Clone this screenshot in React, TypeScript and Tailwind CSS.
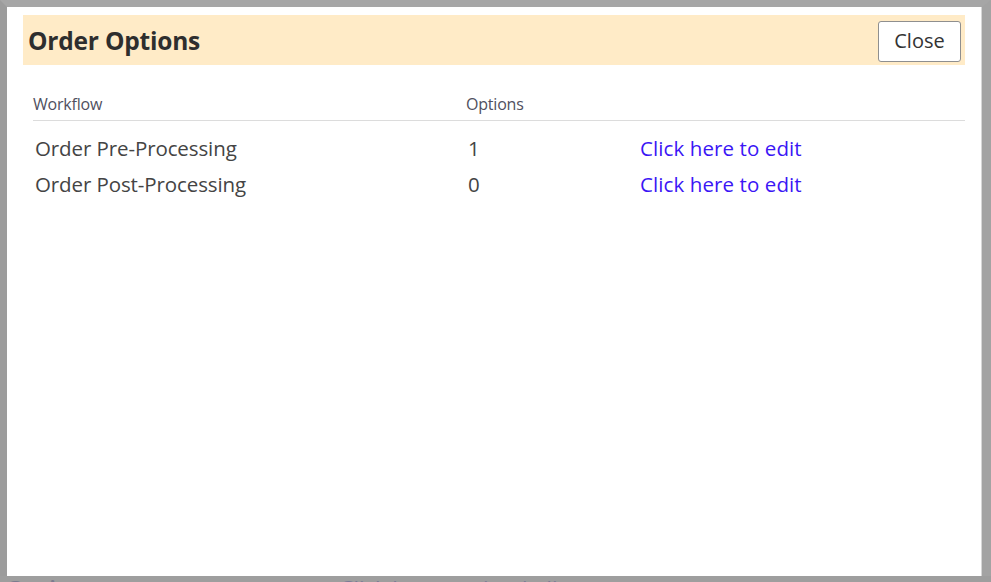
import React, { JSX } from 'react';

/**
 * OrderOptionsDialog
 * Modal listing the order workflows and how many options each one has.
 */
interface WorkflowRow {
  name: string;
  options: number;
}

const rows: WorkflowRow[] = [
  { name: 'Order Pre-Processing', options: 1 },
  { name: 'Order Post-Processing', options: 0 },
];

export default function App(): JSX.Element {
  return (
    <div
      className="w-[991px] h-[582px] flex flex-col bg-[#a3a3a3] overflow-hidden"
      style={{ fontFamily: '"Open Sans", "Noto Sans", sans-serif' }}
    >
      {/* Dialog frame */}
      <div className="flex-1 flex border-l-[7px] border-t-[7px] border-r-[9px] border-[#a3a3a3] border-l-[#9c9c9c] border-t-[#a6a6a6]">
        <div className="flex-1 flex flex-col bg-white border-r border-[#d6d6d6] pt-2 pl-4 pr-4">
          {/* Header */}
          <div className="h-[50px] bg-[#ffebc7] flex items-center justify-between pl-[5px] pr-1">
            <h2 className="text-[24.5px] font-bold text-[#2e2e2e] tracking-[-0.2px] mt-[2px]">Order Options</h2>
            <button
              type="button"
              className="h-[41px] w-[83px] bg-white border border-[#8f8f8f] rounded-[3px] text-[20px] text-[#333] mt-[2px]"
            >
              Close
            </button>
          </div>

          {/* Table */}
          <div className="mt-[25px] ml-[10px]">
            <div className="grid grid-cols-[433px_174px_1fr] border-b border-[#dcdcdc] pb-[4px] pt-[2px] text-[16px] leading-6 text-[#505060] tracking-[-0.2px]">
              <span>Workflow</span>
              <span>Options</span>
              <span />
            </div>
            <div className="mt-[9px]">
              {rows.map((row) => (
                <div
                  key={row.name}
                  className="grid grid-cols-[433px_172px_1fr] h-9 items-center text-[20.5px] text-[#444] pl-[2px]"
                >
                  <span className="tracking-[-0.1px]">{row.name}</span>
                  <span>{row.options}</span>
                  <a href="#" className="text-[#3b16f5] tracking-[0.1px]">
                    Click here to edit
                  </a>
                </div>
              ))}
            </div>
          </div>
        </div>
      </div>

      {/* Page behind the dialog, showing through the bottom edge */}
      <div className="h-[6px] overflow-hidden flex bg-[#9e9e9e]">
        <span className="ml-[6px] mt-[1px] text-[24px] leading-none font-semibold text-[#5a5a80] opacity-50">
          Options
        </span>
        <span className="ml-[242px] mt-[1px] text-[22px] leading-none text-[#5a5a90] opacity-50">
          Click here to view/edit
        </span>
      </div>
    </div>
  );
}
